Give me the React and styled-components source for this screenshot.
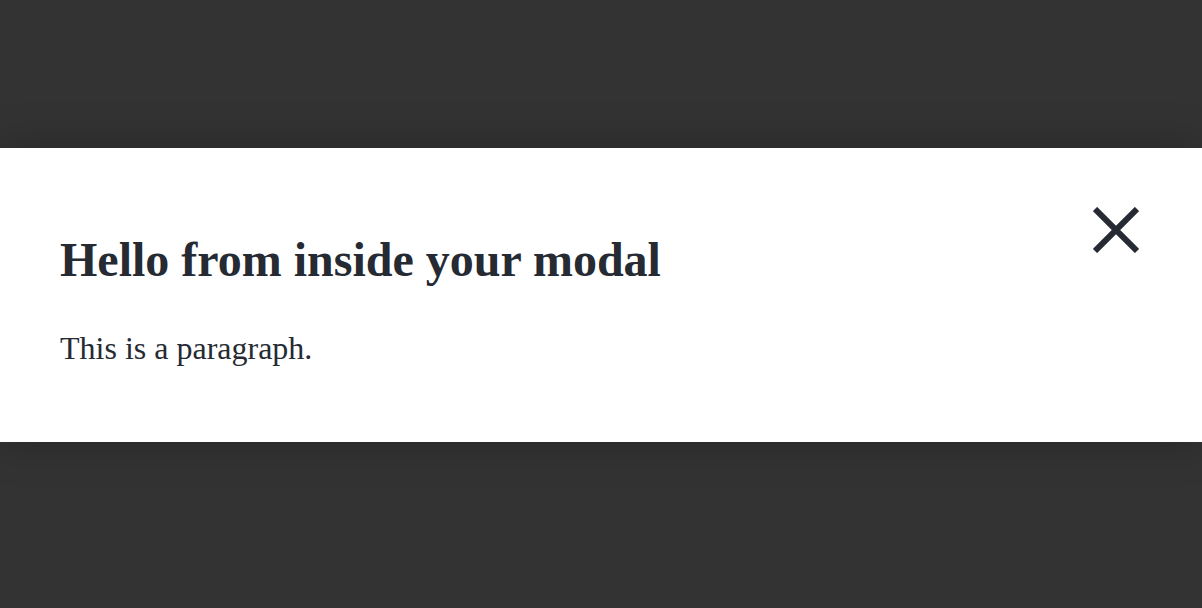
import React from 'react'
import styled, { createGlobalStyle } from 'styled-components'

const GlobalStyle = createGlobalStyle`
  html, body {
    margin: 0;
    padding: 0;
    background: #333333;
    height: 100%;
  }
  #root {
    height: 100%;
  }
`

const Overlay = styled.div`
  height: 100%;
  padding-top: 148px;
  box-sizing: border-box;
  font-family: 'Liberation Serif', 'Times New Roman', serif;
`

const Modal = styled.div`
  position: relative;
  background: #ffffff;
  height: 294px;
  box-sizing: border-box;
  padding: 85px 60px 0;
  color: #262a33;
  box-shadow: 0 0 40px rgba(0, 0, 0, 0.25);
`

const Title = styled.h1`
  margin: 0;
  font-size: 48px;
  font-weight: bold;
  line-height: 54px;
`

const Paragraph = styled.p`
  margin: 43px 0 0;
  font-size: 32px;
  line-height: 36px;
`

const CloseButton = styled.button`
  position: absolute;
  top: 59px;
  right: 63px;
  width: 46px;
  height: 46px;
  padding: 0;
  border: none;
  background: transparent;
  cursor: pointer;
  display: flex;
  align-items: center;
  justify-content: center;
`

const App = () => (
  <>
    <GlobalStyle />
    <Overlay>
      <Modal>
        <CloseButton aria-label='Close'>
          <svg width='46' height='46' viewBox='0 0 46 46'>
            <path d='M2 2 L44 44 M44 2 L2 44' stroke='#262a33' strokeWidth='6' />
          </svg>
        </CloseButton>
        <Title>Hello from inside your modal</Title>
        <Paragraph>This is a paragraph.</Paragraph>
      </Modal>
    </Overlay>
  </>
)

export default App
